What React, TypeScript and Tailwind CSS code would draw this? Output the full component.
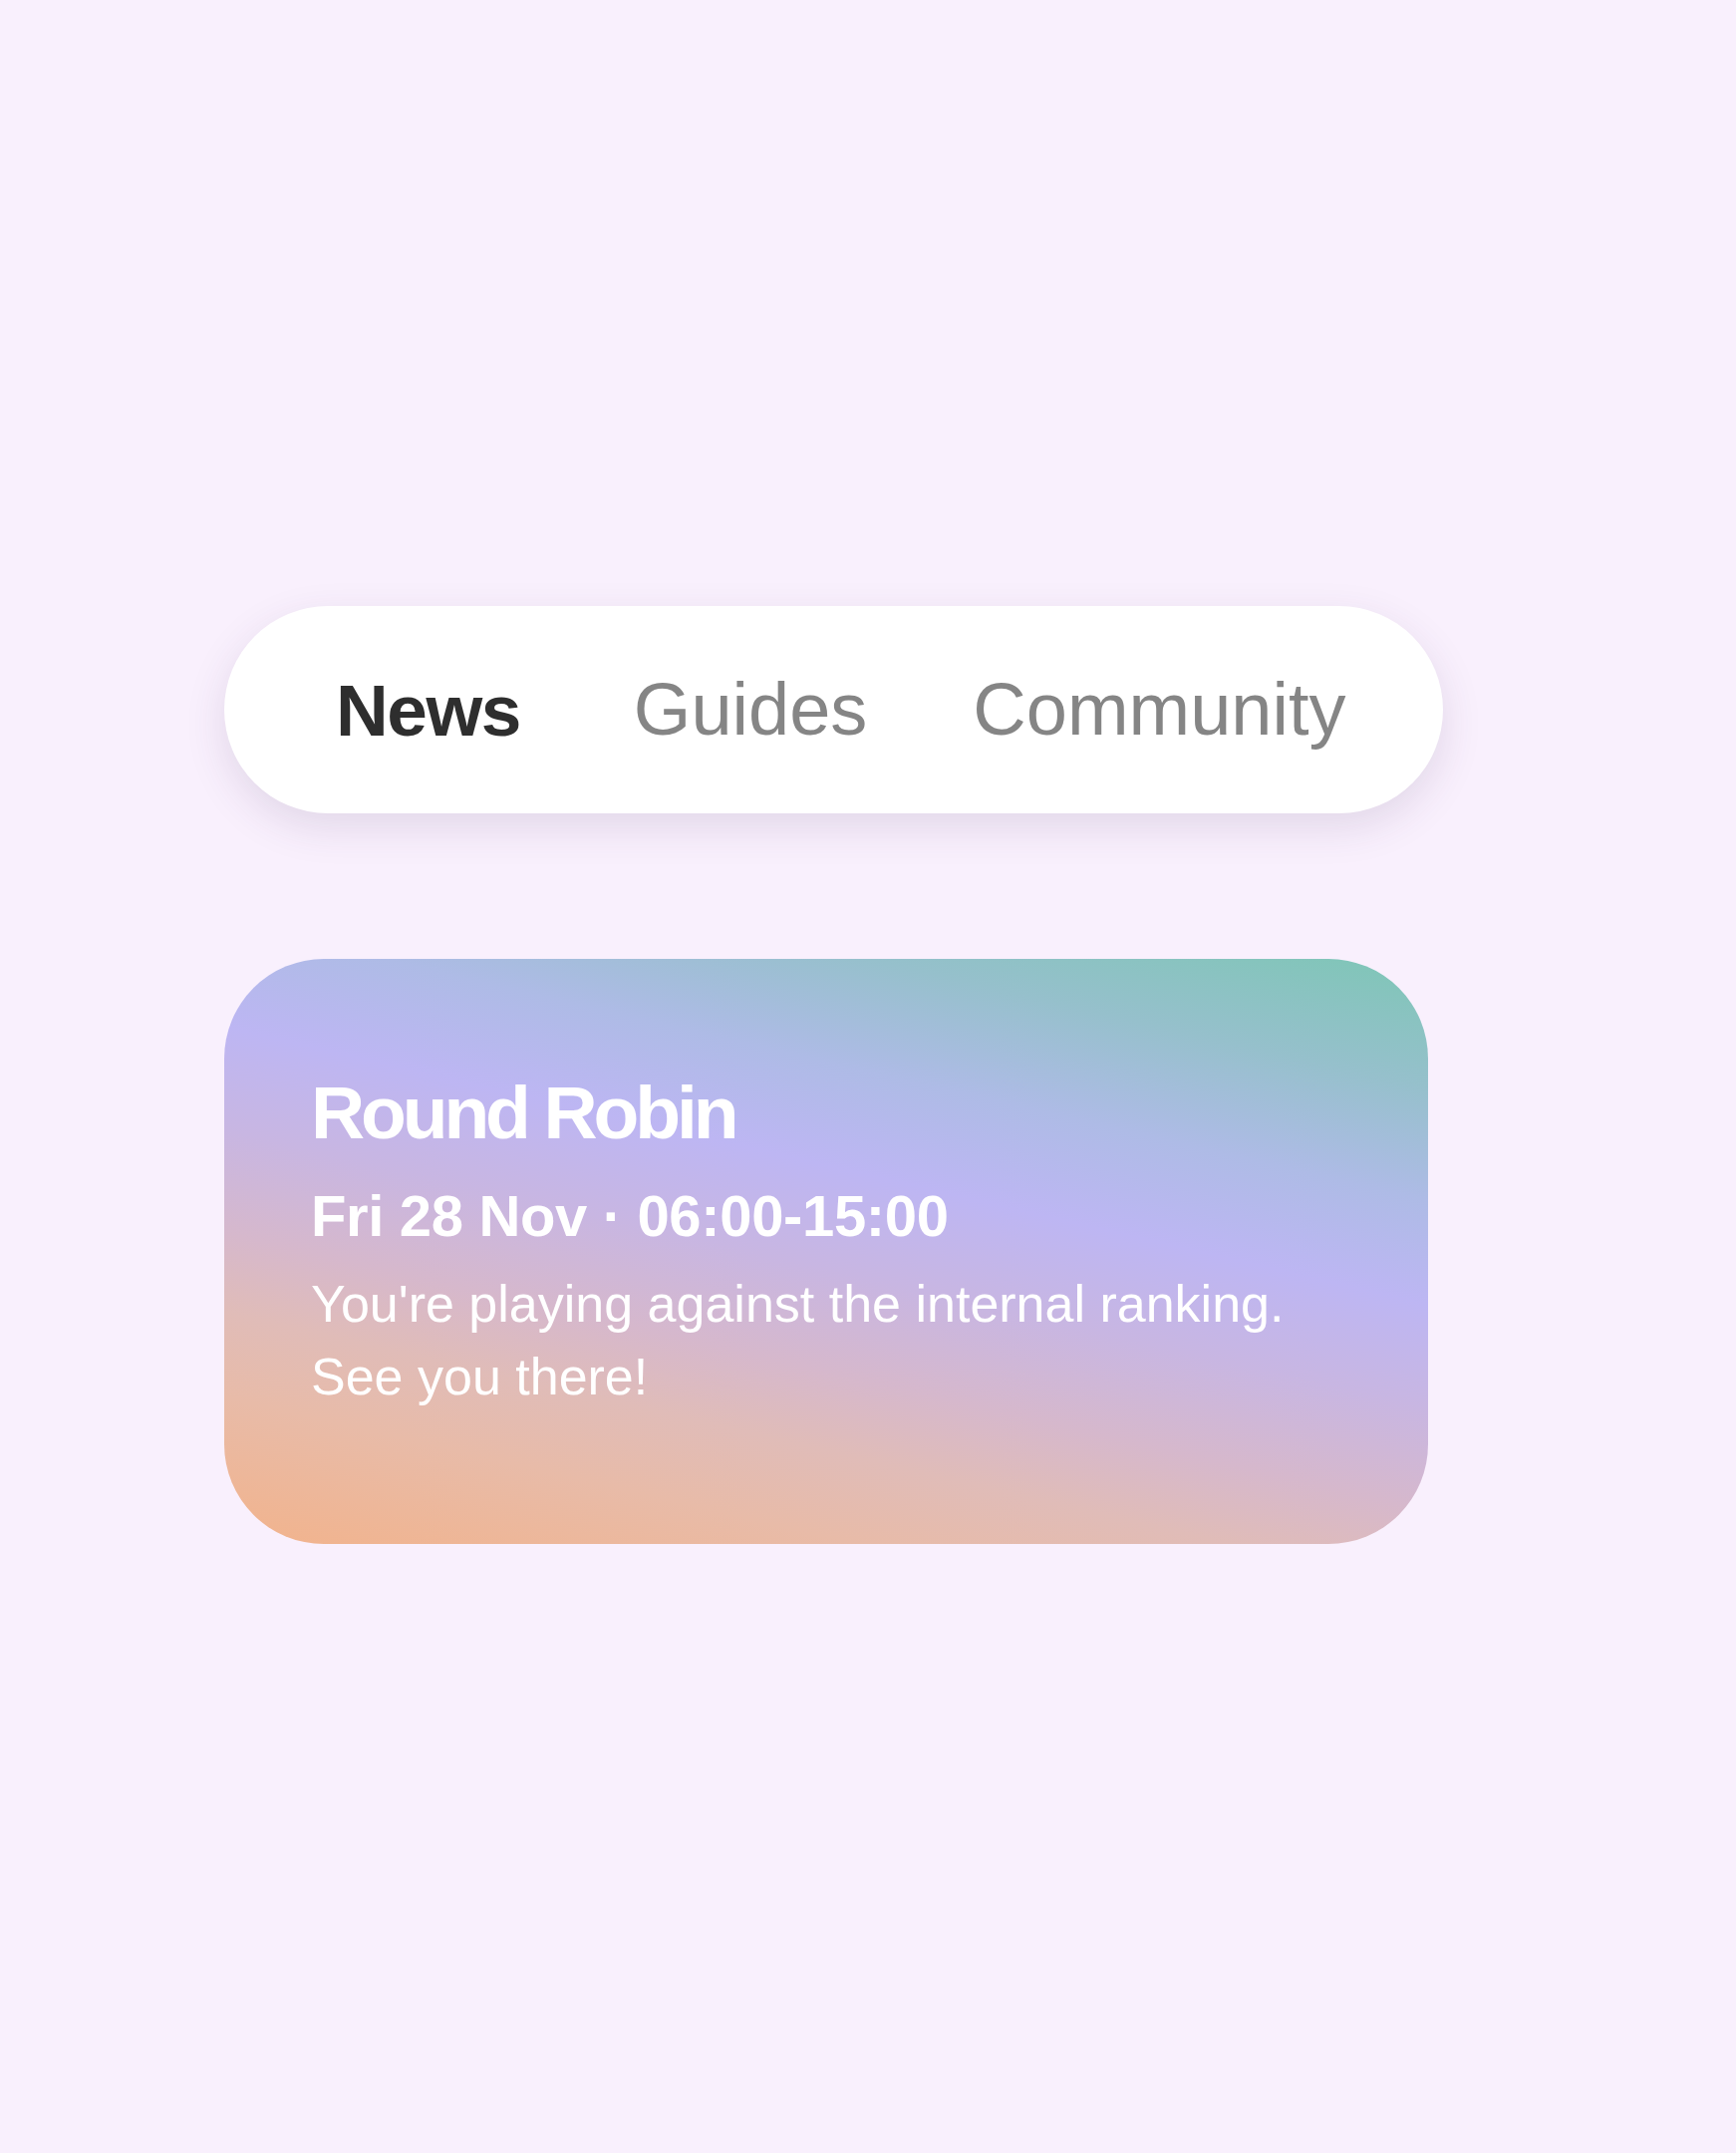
const tabs = [
  { label: 'News', cls: 'text-[73px] font-bold tracking-[-0.02em] text-[#2e2e2e]' },
  { label: 'Guides', cls: 'ml-[114px] text-[74px] font-normal text-[#858585]' },
  { label: 'Community', cls: 'ml-[106px] text-[74px] font-normal text-[#858585]' },
];

export default function App() {
  return (
    <div
      className="min-h-screen w-full bg-[#f9f0fd] pt-[608px] pl-[225px]"
      style={{ fontFamily: '"Liberation Sans", Arial, sans-serif' }}
    >
      <div className="flex flex-col items-start">
        {/* tab pill */}
        <nav className="flex h-[208px] w-[1223px] items-center rounded-full bg-white pl-[112px] shadow-[0_14px_40px_rgba(70,50,90,0.13)]">
          {tabs.map(t => (
            <span key={t.label} className={`leading-none ${t.cls}`}>
              {t.label}
            </span>
          ))}
        </nav>

        {/* event card */}
        <div className="mt-[146px] flex h-[587px] w-[1208px] flex-col rounded-[100px] bg-[linear-gradient(13deg,#f2b38c_0%,#e8bba8_17%,#e0bcb8_27%,#d6b8cc_36%,#c8b6e2_48%,#bdb6f3_60%,#aebbe6_72%,#96c0cc_85%,#7ec6b6_100%)] pl-[87px] pt-[117px] text-white">
          <h2 className="text-[75px] font-bold leading-none tracking-[-0.055em]">Round Robin</h2>
          <p className="mt-[37px] text-[58px] font-bold leading-none tracking-[-0.006em]">
            Fri 28 Nov · 06:00-15:00
          </p>
          <p className="mt-[23px] text-[52px] leading-[73px]">
            You're playing against the internal ranking.
            <br />
            See you there!
          </p>
        </div>
      </div>
    </div>
  );
}
